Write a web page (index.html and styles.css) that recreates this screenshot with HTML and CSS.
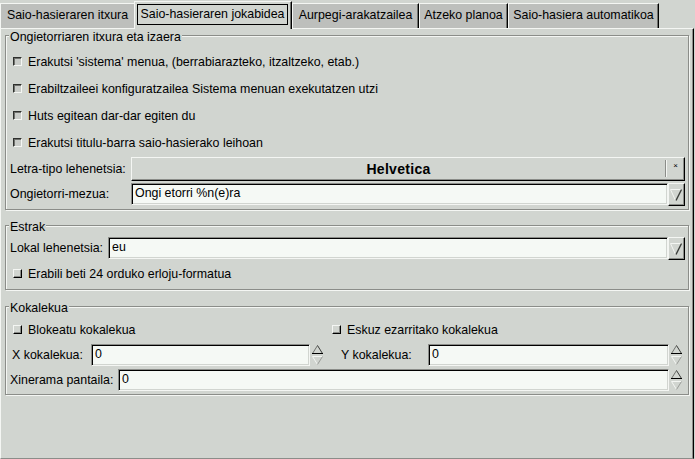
FILE: index.html
```html
<!DOCTYPE html>
<html>
<head>
<meta charset="utf-8">
<link rel="stylesheet" href="styles.css">
</head>
<body>
<div class="window">
  <div class="tabs">
    <div class="tab t1">Saio-hasieraren itxura</div>
    <div class="tab active t2"><span class="focus">Saio-hasieraren jokabidea</span></div>
    <div class="tab t3">Aurpegi-arakatzailea</div>
    <div class="tab t4">Atzeko planoa</div>
    <div class="tab t5">Saio-hasiera automatikoa</div>
  </div>
  <div class="panel">
    <div class="frame f1">
      <div class="frame-title">Ongietorriaren itxura eta izaera</div>
      <div class="rows">
        <div class="check-row"><span class="cb cb-flat"></span><span>Erakutsi 'sistema' menua, (berrabiarazteko, itzaltzeko, etab.)</span></div>
        <div class="check-row"><span class="cb cb-flat"></span><span>Erabiltzaileei konfiguratzailea Sistema menuan exekutatzen utzi</span></div>
        <div class="check-row"><span class="cb cb-flat"></span><span>Huts egitean dar-dar egiten du</span></div>
        <div class="check-row"><span class="cb cb-flat"></span><span>Erakutsi titulu-barra saio-hasierako leihoan</span></div>
      </div>
      <div class="field-row font-row">
        <span class="label lw-121">Letra-tipo lehenetsia:</span>
        <div class="fontbtn">
          <span class="fb-main">Helvetica</span>
          <span class="fb-sep"></span>
          <span class="fb-size">×</span>
        </div>
      </div>
      <div class="field-row entry-row">
        <span class="label lw-121">Ongietorri-mezua:</span>
        <div class="combo">
          <div class="entry">Ongi etorri %n(e)ra</div>
          <div class="combo-btn">
            <svg width="15" height="21" viewBox="0 0 15 21">
              <path d="M1.5 5.5 H12.5" stroke="#f4f6f3" stroke-width="1" fill="none"/>
              <path d="M1.5 5.5 L6.5 16.5" stroke="#f4f6f3" stroke-width="1" fill="none"/>
              <path d="M12.5 5.5 L7 16.5" stroke="#3a3c39" stroke-width="1.4" fill="none"/>
            </svg>
          </div>
        </div>
      </div>
    </div>

    <div class="frame f2">
      <div class="frame-title">Estrak</div>
      <div class="field-row entry-row first">
        <span class="label lw-98">Lokal lehenetsia:</span>
        <div class="combo">
          <div class="entry">eu</div>
          <div class="combo-btn">
            <svg width="15" height="21" viewBox="0 0 15 21">
              <path d="M1.5 5.5 H12.5" stroke="#f4f6f3" stroke-width="1" fill="none"/>
              <path d="M1.5 5.5 L6.5 16.5" stroke="#f4f6f3" stroke-width="1" fill="none"/>
              <path d="M12.5 5.5 L7 16.5" stroke="#3a3c39" stroke-width="1.4" fill="none"/>
            </svg>
          </div>
        </div>
      </div>
      <div class="check-row after-entry"><span class="cb cb-raised"></span><span>Erabili beti 24 orduko erloju-formatua</span></div>
    </div>

    <div class="frame f3">
      <div class="frame-title">Kokalekua</div>
      <div class="loc-checks">
        <div class="check-row"><span class="cb cb-raised"></span><span>Blokeatu kokalekua</span></div>
        <div class="check-row second"><span class="cb cb-raised"></span><span>Eskuz ezarritako kokalekua</span></div>
      </div>
      <div class="spin-row xy-row">
        <span class="label lx">X kokalekua:</span>
        <div class="entry ex">0</div>
        <div class="spinner">
          <svg width="13" height="22" viewBox="0 0 13 22">
            <path d="M6.5 1.5 L1.5 9.5" stroke="#6f716d" fill="none"/>
            <path d="M6.5 1.5 L11.5 9.5" stroke="#3a3c39" fill="none"/>
            <path d="M1 9.5 H12" stroke="#000" fill="none"/>
            <path d="M1.5 12.5 H11.5" stroke="#f4f6f3" fill="none"/>
            <path d="M1.5 12.5 L6.5 20.5" stroke="#f4f6f3" fill="none"/>
            <path d="M11.5 12.5 L6.5 20.5" stroke="#9a9c98" fill="none"/>
          </svg>
        </div>
        <span class="label ly">Y kokalekua:</span>
        <div class="entry grow">0</div>
        <div class="spinner">
          <svg width="13" height="22" viewBox="0 0 13 22">
            <path d="M6.5 1.5 L1.5 9.5" stroke="#6f716d" fill="none"/>
            <path d="M6.5 1.5 L11.5 9.5" stroke="#3a3c39" fill="none"/>
            <path d="M1 9.5 H12" stroke="#000" fill="none"/>
            <path d="M1.5 12.5 H11.5" stroke="#f4f6f3" fill="none"/>
            <path d="M1.5 12.5 L6.5 20.5" stroke="#f4f6f3" fill="none"/>
            <path d="M11.5 12.5 L6.5 20.5" stroke="#9a9c98" fill="none"/>
          </svg>
        </div>
      </div>
      <div class="spin-row xin-row">
        <span class="label lxin">Xinerama pantaila:</span>
        <div class="entry grow">0</div>
        <div class="spinner">
          <svg width="13" height="22" viewBox="0 0 13 22">
            <path d="M6.5 1.5 L1.5 9.5" stroke="#6f716d" fill="none"/>
            <path d="M6.5 1.5 L11.5 9.5" stroke="#3a3c39" fill="none"/>
            <path d="M1 9.5 H12" stroke="#000" fill="none"/>
            <path d="M1.5 12.5 H11.5" stroke="#f4f6f3" fill="none"/>
            <path d="M1.5 12.5 L6.5 20.5" stroke="#f4f6f3" fill="none"/>
            <path d="M11.5 12.5 L6.5 20.5" stroke="#9a9c98" fill="none"/>
          </svg>
        </div>
      </div>
    </div>
  </div>
</div>
</body>
</html>
```

FILE: styles.css
```css
html, body {
  margin: 0;
  padding: 0;
  background: #d1d5d0;
}

body {
  font-family: "Liberation Sans", Arial, sans-serif;
  font-size: 12.4px;
  line-height: 16px;
  color: #000;
}

.window {
  width: 695px;
  height: 459px;
  overflow: hidden;
}

/* ---------- tabs ---------- */
.tabs {
  display: flex;
  align-items: flex-end;
  height: 28px;
}

.tab {
  box-sizing: border-box;
  height: 25px;
  background: #bdbfbc;
  border-top: 1px solid #f4f6f3;
  border-left: 1px solid #f4f6f3;
  border-right: 1px solid #000;
  box-shadow: inset -1px 0 0 #6f716d;
  display: flex;
  align-items: center;
  justify-content: center;
  padding-bottom: 2px;
  white-space: nowrap;
}

.t1 { width: 134px; border-right: none; box-shadow: none; }
.t3 { width: 127px; }
.t4 { width: 89px; }
.t5 { width: 151px; }

.tab.active {
  width: 158px;
  height: 28px;
  margin-bottom: -1px;
  background: #d1d5d0;
  position: relative;
  z-index: 1;
  padding: 2px 3px 4px 2px;
  align-items: stretch;
}

.focus {
  flex: 1;
  border: 1px solid #000;
  display: flex;
  align-items: center;
  justify-content: center;
  padding-bottom: 2px;
}

/* ---------- panel ---------- */
.panel {
  box-sizing: border-box;
  width: 694px;
  height: 431px;
  border-top: 1px solid #f4f6f3;
  border-left: 1px solid #f4f6f3;
  border-right: 1px solid #000;
  border-bottom: 1px solid #8b8d89;
  box-shadow: inset -1px 0 0 #8b8d89;
  padding: 0 4px;
}

/* ---------- frames ---------- */
.frame {
  border: 1px solid #8b8d89;
  box-shadow: inset 1px 1px 0 #f4f6f3, 1px 1px 0 #f4f6f3;
  padding: 0 3px 0 4px;
}

.frame-title {
  width: fit-content;
  margin: -7px 0 0 -1px;
  padding: 0 1px;
  background: #d1d5d0;
  height: 16px;
  white-space: nowrap;
}

.f1 { margin-top: 6px; padding-bottom: 4px; }
.f2 { margin-top: 15px; padding-bottom: 2px; }
.f3 { margin-top: 16px; padding-bottom: 3px; }

.rows { margin-top: 3px; }

.check-row {
  height: 27px;
  display: flex;
  align-items: center;
  padding-left: 3px;
  white-space: nowrap;
}

.check-row.after-entry { margin-top: 1px; }

.cb {
  box-sizing: border-box;
  width: 9px;
  height: 9px;
  margin-right: 6px;
  flex: none;
}

.cb-flat {
  background: #c9ccc8;
  border-top: 1px solid #2e302d;
  border-left: 1px solid #2e302d;
  border-right: 1px solid #f4f6f3;
  border-bottom: 1px solid #f4f6f3;
  box-shadow: inset 1px 1px 0 #6f716d;
}

.cb-raised {
  background: #d1d5d0;
  border-top: 1px solid #f4f6f3;
  border-left: 1px solid #f4f6f3;
  border-right: 1px solid #000;
  border-bottom: 1px solid #000;
  box-shadow: inset -1px -1px 0 #8b8d89;
}

/* ---------- field rows ---------- */
.field-row {
  display: flex;
  align-items: center;
}

.label {
  flex: none;
  white-space: nowrap;
}

.lw-121 { width: 121px; }
.lw-98 { width: 98px; }

.font-row { margin-top: 1px; height: 24px; }
.entry-row { margin-top: 2px; height: 22px; }
.entry-row.first { margin-top: 2px; }

.fontbtn {
  flex: 1;
  box-sizing: border-box;
  height: 24px;
  display: flex;
  align-items: center;
  border-top: 1px solid #f4f6f3;
  border-left: 1px solid #f4f6f3;
  border-right: 1px solid #000;
  border-bottom: 1px solid #000;
  box-shadow: inset -1px -1px 0 #8b8d89;
}

.fb-main {
  flex: 1;
  text-align: center;
  font-weight: bold;
  font-size: 14px;
  letter-spacing: 0.3px;
}

.fb-sep {
  align-self: stretch;
  margin: 2px 0 3px 0;
  width: 1px;
  border-left: 1px solid #8b8d89;
  background: #f4f6f3;
}

.fb-size {
  width: 17px;
  align-self: flex-start;
  text-align: center;
  font-size: 8px;
  line-height: 8px;
  padding-top: 4px;
}

.combo {
  flex: 1;
  display: flex;
  height: 22px;
}

.entry {
  box-sizing: border-box;
  height: 22px;
  background: #f5f9f5;
  border-top: 1px solid #8b8d89;
  border-left: 1px solid #8b8d89;
  border-right: 1px solid #f4f6f3;
  border-bottom: 1px solid #f4f6f3;
  box-shadow: inset 1px 1px 0 #000, inset -1px -1px 0 #d1d5d0;
  padding: 1px 3px 0 3px;
  white-space: nowrap;
  overflow: hidden;
}

.combo .entry { flex: 1; }

.combo-btn {
  box-sizing: border-box;
  width: 17px;
  height: 23px;
  margin-top: 0;
  background: #d1d5d0;
  border-top: 1px solid #f4f6f3;
  border-left: 1px solid #f4f6f3;
  border-right: 1px solid #000;
  border-bottom: 1px solid #000;
  box-shadow: inset -1px -1px 0 #8b8d89;
  display: flex;
}

/* ---------- location frame ---------- */
.loc-checks {
  display: grid;
  grid-template-columns: 319px 1fr;
}

.spin-row {
  display: flex;
  align-items: center;
  height: 22px;
  padding-right: 2px;
}

.xy-row { margin-top: 1px; }
.xin-row { margin-top: 3px; }

.lx { width: 79px; margin-left: 2px; }
.ex { width: 219px; flex: none; }
.ly { width: 87px; margin-left: 17px; }
.lxin { width: 108px; }

.grow { flex: 1; }

.spinner {
  flex: none;
  width: 13px;
  height: 22px;
  margin-left: 1px;
  display: flex;
}
```
